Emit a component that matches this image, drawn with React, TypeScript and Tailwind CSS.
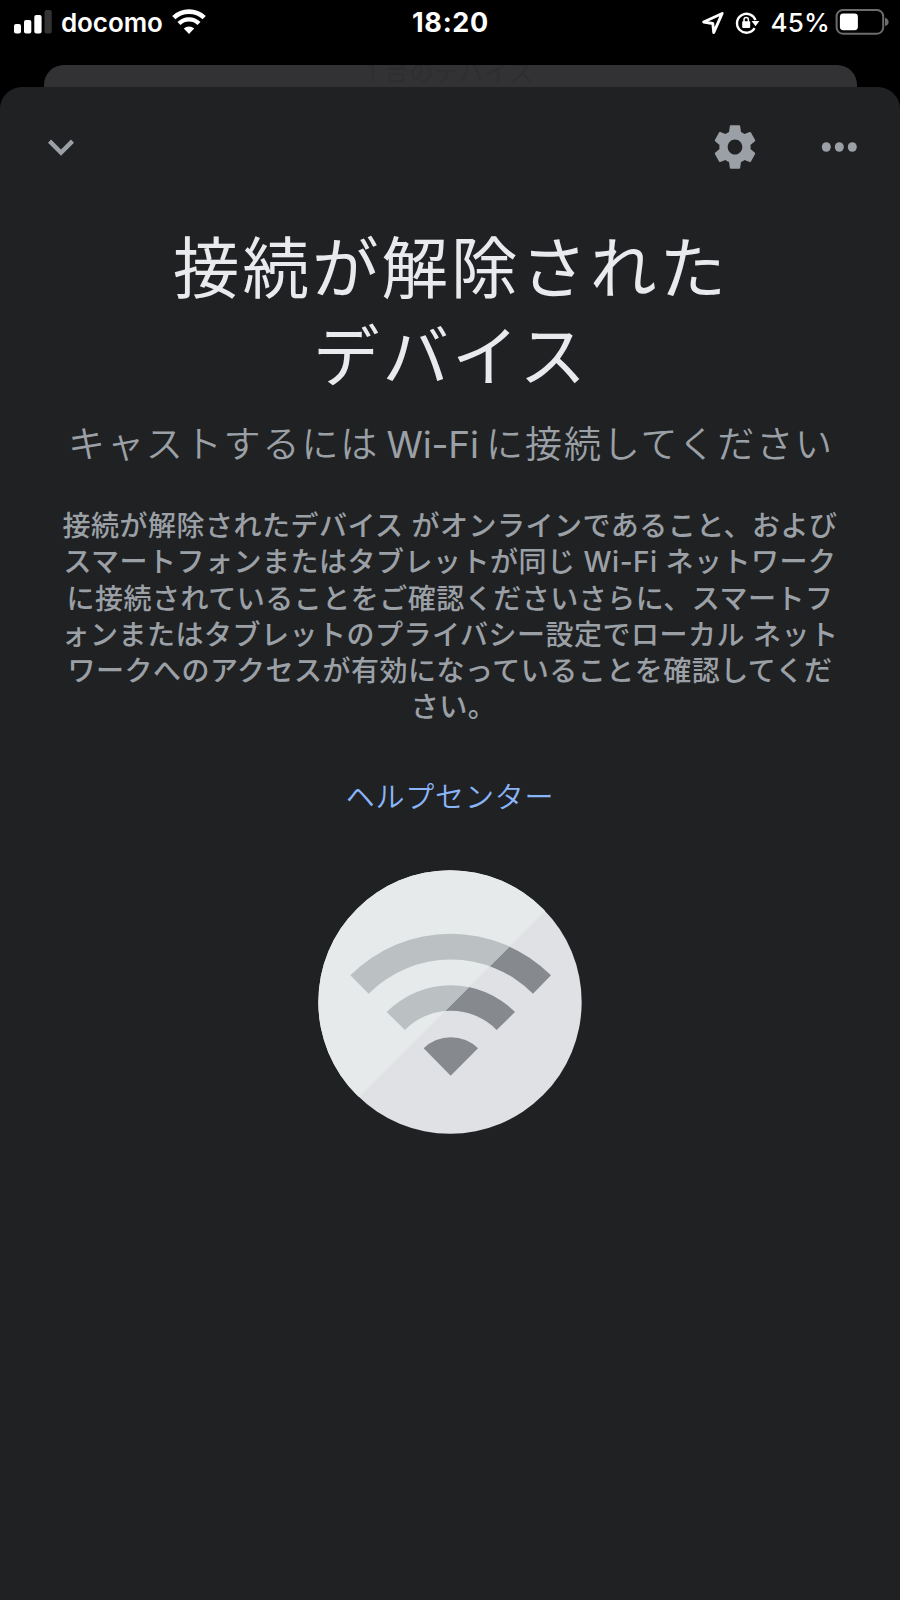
import type { ReactNode } from "react";

const BODY_LINES = [
  "接続が解除されたデバイス がオンラインであること、および",
  "スマートフォンまたはタブレットが同じ Wi-Fi ネットワーク",
  "に接続されていることをご確認くださいさらに、スマートフ",
  "ォンまたはタブレットのプライバシー設定でローカル ネット",
  "ワークへのアクセスが有効になっていることを確認してくだ",
  "さい。",
];

function SignalBars() {
  return (
    <svg width="38" height="25" viewBox="0 0 38 25" fill="#fff">
      <rect x="0" y="15" width="7" height="9.5" rx="2" />
      <rect x="10" y="11" width="7.3" height="13.5" rx="2" />
      <rect x="20.3" y="6" width="7.3" height="18.5" rx="2" />
      <rect x="30.5" y="1" width="7.2" height="23.5" rx="2" fill="#333" />
    </svg>
  );
}

function StatusWifi() {
  return (
    <svg width="34" height="26" viewBox="0 0 34 26" fill="none">
      <path d="M1.8 8.6a22.2 22.2 0 0 1 30.4 0" stroke="#fff" strokeWidth="4.7" />
      <path d="M7 14.5a14.3 14.3 0 0 1 20 0" stroke="#fff" strokeWidth="4.3" />
      <path d="M17 24.9l-5.2-5.3a7.8 7.8 0 0 1 10.4 0z" fill="#fff" />
    </svg>
  );
}

function LocationArrow() {
  return (
    <svg width="24" height="24" viewBox="0 0 24 24" fill="none">
      <path
        d="M21.2 2.4 2.6 11l9.2 1.5.9 9.1z"
        stroke="#fff"
        strokeWidth="2.8"
        strokeLinejoin="round"
      />
    </svg>
  );
}

function RotationLock() {
  return (
    <svg width="25" height="24" viewBox="0 0 25 24" fill="none">
      <path d="M19.6 17.2a9.5 9.5 0 1 1 .9-8" stroke="#fff" strokeWidth="2.4" />
      <path d="M16.6 10h7.8l-3.9 5.2z" fill="#fff" />
      <rect x="7.2" y="10.2" width="8" height="6.8" rx="1" fill="#fff" />
      <path d="M9 11V8.8a2.2 2.2 0 0 1 4.4 0V11" stroke="#fff" strokeWidth="1.5" />
    </svg>
  );
}

function Battery() {
  return (
    <svg width="54" height="26" viewBox="0 0 54 26" fill="none">
      <rect x="1.6" y="1.1" width="46.6" height="23.6" rx="6.2" stroke="#6c6c6c" strokeWidth="2" />
      <rect x="4.9" y="4.6" width="18" height="16.6" rx="3.4" fill="#fff" />
      <path d="M50 8.8c2 .5 3.6 2 3.6 4.1s-1.6 3.6-3.6 4.1z" fill="#6c6c6c" />
    </svg>
  );
}

function StatusBar() {
  return (
    <header className="flex h-[65px] shrink-0 items-start justify-between pr-[11px] pl-[14px] text-[26px] leading-[26px] text-white">
      <div className="flex w-[340px] items-start pt-[9px]">
        <SignalBars />
        <span className="ml-[9px] w-[111px] pt-px font-semibold tracking-[-0.1px]">docomo</span>
        <StatusWifi />
      </div>
      <span className="mr-[2px] pt-[10px] text-[27px] font-bold tracking-[0.7px]">18:20</span>
      <div className="flex w-[340px] items-start justify-end pt-[9px]">
        <span className="mt-[2px] mr-[10px]">
          <LocationArrow />
        </span>
        <span className="mt-[2px] mr-[10px]">
          <RotationLock />
        </span>
        <span className="mr-[5px] pt-px font-medium tracking-[0.2px]">45%</span>
        <Battery />
      </div>
    </header>
  );
}

function IconButton({ label, children }: { label: string; children: ReactNode }) {
  return (
    <button type="button" aria-label={label} className="grid size-[54px] place-items-center text-[#9aa0a6]">
      {children}
    </button>
  );
}

function Toolbar() {
  return (
    <div className="flex items-center pt-[33px] pr-[34px] pl-[34px]">
      <IconButton label="閉じる">
        <svg width="52" height="52" viewBox="0 0 24 24" fill="currentColor">
          <path d="M16.59 8.59 12 13.17 7.41 8.59 6 10l6 6 6-6z" />
        </svg>
      </IconButton>
      <div className="ml-auto flex gap-[50px]">
        <IconButton label="設定">
          <svg width="50" height="52" viewBox="0 0 24 24" preserveAspectRatio="none" fill="currentColor">
            <path d="M19.43 12.98c.04-.32.07-.64.07-.98s-.03-.66-.07-.98l2.11-1.65c.19-.15.24-.42.12-.64l-2-3.46c-.12-.22-.39-.3-.61-.22l-2.49 1c-.52-.4-1.08-.73-1.69-.98l-.38-2.65C14.46 2.18 14.25 2 14 2h-4c-.25 0-.46.18-.49.42l-.38 2.65c-.61.25-1.17.59-1.69.98l-2.49-1c-.23-.09-.49 0-.61.22l-2 3.46c-.13.22-.07.49.12.64l2.11 1.65c-.04.32-.07.65-.07.98s.03.66.07.98l-2.11 1.65c-.19.15-.24.42-.12.64l2 3.46c.12.22.39.3.61.22l2.49-1c.52.4 1.08.73 1.69.98l.38 2.65c.03.24.24.42.49.42h4c.25 0 .46-.18.49-.42l.38-2.65c.61-.25 1.17-.59 1.69-.98l2.49 1c.23.09.49 0 .61-.22l2-3.46c.12-.22.07-.49-.12-.64l-2.11-1.65zM12 15.5c-1.93 0-3.5-1.57-3.5-3.5s1.57-3.5 3.5-3.5 3.5 1.57 3.5 3.5-1.57 3.5-3.5 3.5z" />
          </svg>
        </IconButton>
        <IconButton label="その他">
          <svg width="36" height="12" viewBox="0 0 36 12" fill="currentColor">
            <ellipse cx="5.3" cy="6" rx="4.5" ry="4.8" />
            <ellipse cx="18.3" cy="6" rx="4.5" ry="4.8" />
            <ellipse cx="31.3" cy="6" rx="4.5" ry="4.8" />
          </svg>
        </IconButton>
      </div>
    </div>
  );
}

/** Two-tone disc: everything above the diagonal is drawn in the lighter shades. */
function WifiIllustration() {
  const waves = (
    <>
      <path d="M151 376a426 426 0 0 1 602 0l-54 55a348 348 0 0 0-493 0z" />
      <path d="M260 486a271 271 0 0 1 385 0l-55 54a193 193 0 0 0-275 0z" />
      <path d="M452 677l-81-82a116 116 0 0 1 163 0z" />
    </>
  );
  return (
    <svg width="264" height="264" viewBox="54 60 792 792">
      <defs>
        <clipPath id="upper">
          <path d="M0 0H918L0 918z" />
        </clipPath>
      </defs>
      <circle cx="450" cy="456" r="395" fill="#dfe1e5" />
      <g fill="#868a8e">{waves}</g>
      <g clipPath="url(#upper)">
        <circle cx="450" cy="456" r="395" fill="#e6eaeb" />
        <g fill="#bbc0c3">{waves}</g>
      </g>
    </svg>
  );
}

export default function App() {
  return (
    <div className="flex h-[1600px] w-[900px] flex-col overflow-hidden bg-black font-['Inter','Noto_Sans_CJK_JP',sans-serif]">
      <StatusBar />

      {/* Sheet peeking out behind the current one */}
      <div className="mx-[43.5px] flex h-[22px] shrink-0 items-end justify-center overflow-hidden rounded-t-[20px] bg-[#323234]">
        <span className="pb-[2px] text-[24px] leading-[24px] tracking-[1px] text-[#2e2e30]">1 台のデバイス</span>
      </div>

      <main className="flex flex-1 flex-col rounded-t-[22px] bg-[#202123]">
        <Toolbar />
        <div className="flex flex-col items-center text-center whitespace-nowrap">
          <h1 className="mt-[51px] pl-[2px] text-[66.5px] leading-[88px] font-normal tracking-[3px] text-[#e8eaed]">
            接続が解除された
            <br />
            デバイス
          </h1>
          <p className="mt-[19px] pl-[2px] text-[37px] leading-[50px] font-[350] tracking-[1.9px] [word-spacing:-5px] text-[#9aa0a6]">
            キャストするには <span className="font-normal tracking-[-0.2px]">Wi-Fi</span> に接続してください
          </p>
          <p className="mt-[38px] text-[28px] leading-[36.3px] font-medium tracking-[0.5px] text-[#9aa0a6]">
            {BODY_LINES.map((line) => (
              <span key={line} className="block last:pl-[7px]">
                {line}
              </span>
            ))}
          </p>
          <a href="#help" className="mt-[52px] text-[29px] leading-[40px] font-[350] tracking-[0.8px] text-[#8ab4f8]">
            ヘルプセンター
          </a>
          <div className="mt-[52px]">
            <WifiIllustration />
          </div>
        </div>
      </main>
    </div>
  );
}
